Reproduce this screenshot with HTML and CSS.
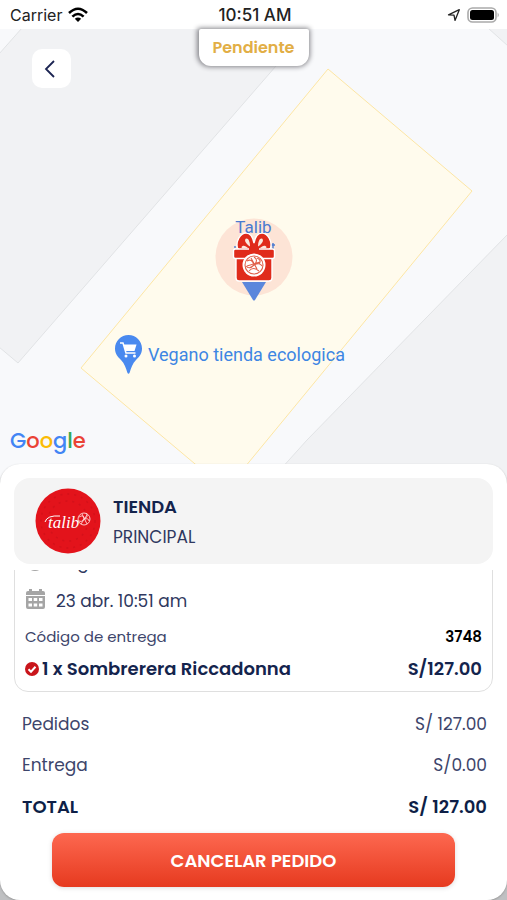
FILE: index.html
```
<!DOCTYPE html>
<html lang="es">
<head>
  <meta charset="utf-8">
  <meta name="viewport" content="width=device-width, initial-scale=1">
  <title>Pedido</title>
  <link rel="stylesheet" href="styles.css">
</head>
<body>
<div class="screen">
  <header class="status-bar">
    <div class="carrier">
      <span>Carrier</span>
      <svg width="20" height="16" viewBox="0 0 20 16">
        <g fill="none" stroke="#000" stroke-width="2.6">
          <path d="M1 6 Q10 -2.5 19 6" />
          <path d="M4.4 9.6 Q10 4.4 15.6 9.6" />
        </g>
        <path d="M6.8 11.8 Q10 9 13.2 11.8 L10 15 Z" />
      </svg>
    </div>
    <time class="clock">10:51 AM</time>
    <div class="indicators">
      <svg width="14" height="14" viewBox="0 0 14 14">
        <path d="M1.5 6.8 L12.3 1.7 L8 12.4 L7 7.2 Z" fill="none" stroke="#222" stroke-width="1.3" stroke-linejoin="round" />
      </svg>
      <svg width="33" height="16" viewBox="0 0 33 16">
        <rect x="1" y="1" width="28" height="14" rx="4.5" fill="#fff" stroke="#aaa" stroke-width="1.6" />
        <rect x="3" y="3" width="24" height="10" rx="2.5" />
        <path d="M30.6 5.5 Q33 8 30.6 10.5 Z" fill="#aaa" />
      </svg>
    </div>
  </header>

  <section class="map">
    <svg class="map-tiles" viewBox="0 29 507 460" preserveAspectRatio="xMidYMin slice">
      <rect y="29" width="507" height="460" fill="#f8f9fb" />
      <g fill="#f1f2f4" stroke="#e1e3e5">
        <path d="M22 28 L309 28 L18 363 L-1 347 L-1 54 Z" />
        <path d="M488 28 L508 46 L508 28 Z" />
        <path d="M508 234 L307 440 L262 490 L508 490 Z" />
      </g>
      <path d="M328 69 L472 191 L226 490 L81 368 Z" fill="#fffbed" stroke="#fde6a4" />
    </svg>

    <button class="back" type="button" aria-label="Volver">
      <svg width="12" height="18" viewBox="0 0 12 18">
        <path d="M10 1 L2 9 L10 17" fill="none" stroke="#1b2452" stroke-width="1.8" />
      </svg>
    </button>
    <div class="order-status">Pendiente</div>

    <div class="store-marker">
      <span class="store-name">Talib</span>
      <svg width="78" height="86" viewBox="0 0 78 86">
        <circle cx="39" cy="39" r="38.5" fill="#f0503c" fill-opacity=".13" />
        <path d="M27 64 H51 L40 82 Q39 83 38 82 Z" fill="#5b87dc" />
        <path d="M20 28 v2 M58 25 v6 M56.500 27 h3.500" stroke="#4a7ad0" stroke-width="1.4" />
        <g fill="#e02b1b">
          <path d="M39 33 C32 34 25 34 22.500 30 C20.500 24 25 15 31 15 C36 15 38 20 39 25 C40 20 42 15 47 15 C53 15 57.500 24 55.500 30 C53 34 46 34 39 33 Z" stroke="#fff" stroke-width="1.4" />
          <path d="M21 39 H57 V60 Q57 63 54 63 H24 Q21 63 21 60 Z" stroke="#fff" stroke-width="1.4" />
          <rect x="18.500" y="31" width="41" height="9.500" rx="2" stroke="#fff" stroke-width="1.4" />
          <path d="M34 29 H44 V36 H34 Z" />
        </g>
        <g fill="#fbe9de">
          <path d="M35 28.500 C35 24 33.500 20.500 31.500 20.500 C29 21 29.500 25 35 28.500 Z" />
          <path d="M43 28.500 C43 24 44.500 20.500 46.500 20.500 C49 21 48.500 25 43 28.500 Z" />
          <path d="M26.500 29 C28 26.500 31 28 33 30 C30 30.500 26.500 31 26.500 29 Z" />
          <path d="M51.500 29 C50 26.500 47 28 45 30 C48 30.500 51.500 31 51.500 29 Z" />
        </g>
        <circle cx="39" cy="47" r="11.500" fill="#fff" />
        <g fill="none" stroke="#e0604a" stroke-width="1.100">
          <circle cx="39" cy="47" r="9" />
          <path d="M32 43 Q37 40 39 47 Q34 52 31 48 M39 39 Q44 42 39 47 Q45 44 47 48 M34 53 Q38 48 44 53 M42 40 Q47 42 44 46 M36 40 L42 51 M32 48 L45 44" />
        </g>
      </svg>
    </div>

    <a class="place" href="#vegano">
      <svg width="29" height="41" viewBox="0 0 29 41">
        <path d="M14.500 1 C7 1 1 7 1 14.500 C1 20 4 23 7 26 C10.500 29.500 12 34 13.300 38.500 Q14.500 41 15.700 38.500 C17 34 18.500 29.500 22 26 C25 23 28 20 28 14.500 C28 7 22 1 14.500 1 Z" fill="#4989ef" />
        <path d="M6 9 H9 L12 19 H21.500" fill="none" stroke="#fff" stroke-width="1.500" />
        <path d="M9.500 10.500 H22.500 L20.500 17 H11.500 Z" fill="#fff" />
        <circle cx="12" cy="22" r="1.500" fill="#fff" />
        <circle cx="20.500" cy="22" r="1.500" fill="#fff" />
      </svg>
      <span>Vegano tienda ecologica</span>
    </a>

    <div class="google"><span class="blue">G</span><span class="red">o</span><span class="yellow">o</span><span class="blue">g</span><span class="green">l</span><span class="red">e</span></div>
  </section>

  <main class="sheet">
    <section class="store">
      <svg class="store-logo" width="66" height="66" viewBox="0 0 66 66">
        <circle cx="33" cy="33" r="32.500" fill="#e3131b" />
        <g fill="none" stroke="#d4111a" stroke-width="1.500" stroke-dasharray="2 5">
          <circle cx="33" cy="33" r="27" />
          <circle cx="33" cy="33" r="20" />
        </g>
        <text class="logo-text" x="13" y="40">talib</text>
        <path d="M10 34 Q12 27 25 28" fill="none" stroke="#fff" />
        <g fill="none" stroke="#ffd9d9" stroke-width=".9">
          <circle cx="49" cy="31" r="6" />
          <path d="M44 29 Q49 26 49 31 Q46 35 44 33 M51 25 Q54 29 49 31 Q54 30 54 33 M46 36 L52 27 M47 26 L52 36" />
        </g>
      </svg>
      <div class="store-text">
        <h1>TIENDA</h1>
        <p>PRINCIPAL</p>
      </div>
    </section>

    <div class="order-scroll">
      <section class="order">
        <div class="order-row meta">
          <svg width="21" height="22" viewBox="0 0 21 22">
            <circle cx="10" cy="13" r="9" fill="#a5a5a5" />
          </svg>
          <span>Pago en efectivo</span>
        </div>
        <div class="order-row meta">
          <svg width="21" height="22" viewBox="0 0 21 22">
            <path d="M4 1 h3 v2 h7 v-2 h3 v2 h1 q2 0 2 2 v2 H1 V5 q0 -2 2 -2 h1 Z M1 8 H20 V19 q0 2 -2 2 H3 q-2 0 -2 -2 Z" fill="#a5a5a5" />
            <path d="M3.500 10 h3.500 v3 h-3.500 Z M8.700 10 h3.500 v3 h-3.500 Z M14 10 h3.500 v3 h-3.500 Z M3.500 15.500 h3.500 v3 h-3.500 Z M8.700 15.500 h3.500 v3 h-3.500 Z M14 15.500 h3.500 v3 h-3.500 Z" fill="#fff" />
          </svg>
          <time>23 abr. 10:51 am</time>
        </div>
        <div class="order-row code">
          <span>Código de entrega</span>
          <strong>3748</strong>
        </div>
        <div class="order-row product">
          <svg width="14" height="14" viewBox="0 0 14 14">
            <circle cx="7" cy="7" r="7" fill="#c9151b" />
            <path d="M3.500 7.200 L6 9.700 L10.500 4.800" fill="none" stroke="#fff" stroke-width="2" />
          </svg>
          <span>1 x Sombrerera Riccadonna</span>
          <span class="price">S/127.00</span>
        </div>
      </section>
    </div>

    <dl class="totals">
      <div>
        <dt>Pedidos</dt>
        <dd>S/ 127.00</dd>
      </div>
      <div>
        <dt>Entrega</dt>
        <dd>S/0.00</dd>
      </div>
      <div class="total">
        <dt>TOTAL</dt>
        <dd>S/ 127.00</dd>
      </div>
    </dl>

    <button class="cancel" type="button">CANCELAR PEDIDO</button>
  </main>
</div>
</body>
</html>
```
FILE: styles.css
```
* {
  box-sizing: border-box;
}

body {
  margin: 0;
  font-family: Poppins, Inter, sans-serif;
  color: #14244d;
  background: #bfc0c2;
}

h1, p, dl, dd {
  margin: 0;
}

button {
  font-family: inherit;
  border: 0;
  cursor: pointer;
}

.screen {
  display: flex;
  flex-direction: column;
  min-height: 100vh;
}

.status-bar {
  display: grid;
  grid-template-columns: 1fr auto 1fr;
  align-items: center;
  height: 29px;
  padding: 0 7px 0 10px;
  background: #fff;
  color: #222;
  font: 500 16px/28px Inter, sans-serif;
}

.carrier, .indicators {
  display: flex;
  align-items: center;
  gap: 6px;
}

.carrier {
  font-weight: 400;
}

.clock {
  font-size: 17px;
}

.indicators {
  justify-content: flex-end;
}

/* map */
.map {
  position: relative;
  flex: 1 0 455px;
}

.map-tiles {
  position: absolute;
  width: 100%;
  height: 100%;
}

.back {
  position: absolute;
  top: 20px;
  left: 32px;
  display: flex;
  align-items: center;
  justify-content: center;
  width: 39px;
  height: 39px;
  padding: 0 3px 0 0;
  border-radius: 10px;
  background: #fff;
}

.order-status {
  position: absolute;
  top: 0;
  left: 50%;
  transform: translateX(-50%);
  padding: 0 14px;
  border-radius: 2px 2px 12px 12px;
  background: #fff;
  box-shadow: 0 0 5px 1px #85858a;
  color: #e2ae45;
  font-size: 16px;
  font-weight: 600;
  line-height: 37px;
}

.store-marker {
  position: absolute;
  top: 189px;
  left: 50%;
  transform: translateX(-50%);
}

.store-marker svg {
  display: block;
}

.store-name {
  position: absolute;
  top: -3px;
  width: 100%;
  text-align: center;
  color: #4a7ad0;
  font: 400 17px/24px Roboto, sans-serif;
}

.place {
  position: absolute;
  top: 305px;
  left: 114px;
  display: flex;
  align-items: center;
  gap: 5px;
  color: #3d86e3;
  font: 400 18px/24px Roboto, sans-serif;
  text-decoration: none;
}

.google {
  position: absolute;
  bottom: 27px;
  left: 10px;
  font-size: 21px;
  font-weight: 500;
  line-height: 32px;
}

.blue {
  color: #4285f4;
}

.red {
  color: #ea4335;
}

.yellow {
  color: #fbbc05;
}

.green {
  color: #34a853;
}

/* order sheet */
.sheet {
  position: relative;
  margin-top: -20px;
  padding: 14px 14px 13px;
  border-radius: 20px;
  background: #fff;
  box-shadow: 0 1px 2px #999;
}

.store {
  display: flex;
  align-items: center;
  gap: 12px;
  height: 86px;
  padding: 0 21px;
  border-radius: 16px;
  background: #f4f4f4;
}

.logo-text {
  fill: #fff;
  font: italic 17px "Liberation Serif", serif;
}

.store-text {
  padding-top: 2px;
  line-height: 30px;
}

.store-text h1 {
  font-size: 18px;
  font-weight: 600;
}

.store-text p {
  color: #2f3860;
  font-size: 17px;
}

.order-scroll {
  display: flex;
  flex-direction: column;
  justify-content: flex-end;
  height: 122px;
  margin-top: 6px;
  overflow: hidden;
}

.order {
  padding: 0 10px 6px;
  border: 1px solid #dfdfdf;
  border-radius: 14px;
}

.order-row {
  display: flex;
  align-items: center;
  line-height: 32px;
}

.meta {
  gap: 10px;
  color: #2f3860;
  font-size: 17px;
  line-height: 39px;
}

.meta svg {
  margin-bottom: 6px;
}

.code {
  justify-content: space-between;
  color: #3d456b;
  font-size: 15px;
}

.code strong {
  color: #000;
  font-weight: 600;
}

.product {
  gap: 3px;
  font-size: 18px;
  font-weight: 600;
}

.price {
  margin-left: auto;
}

.totals {
  padding: 12px 6px 6px 8px;
  color: #3d456b;
  font-size: 17px;
  line-height: 41px;
}

.totals div {
  display: flex;
  justify-content: space-between;
}

.totals .total {
  color: #0e1f47;
  font-size: 18px;
  font-weight: 600;
}

.cancel {
  display: block;
  width: calc(100% - 76px);
  height: 54px;
  margin: 0 38px;
  border-radius: 12px;
  background: linear-gradient(#fd6850, #e63a1f);
  box-shadow: 0 1px 5px #ddd;
  color: #fff;
  font-size: 18px;
  font-weight: 600;
}
```
